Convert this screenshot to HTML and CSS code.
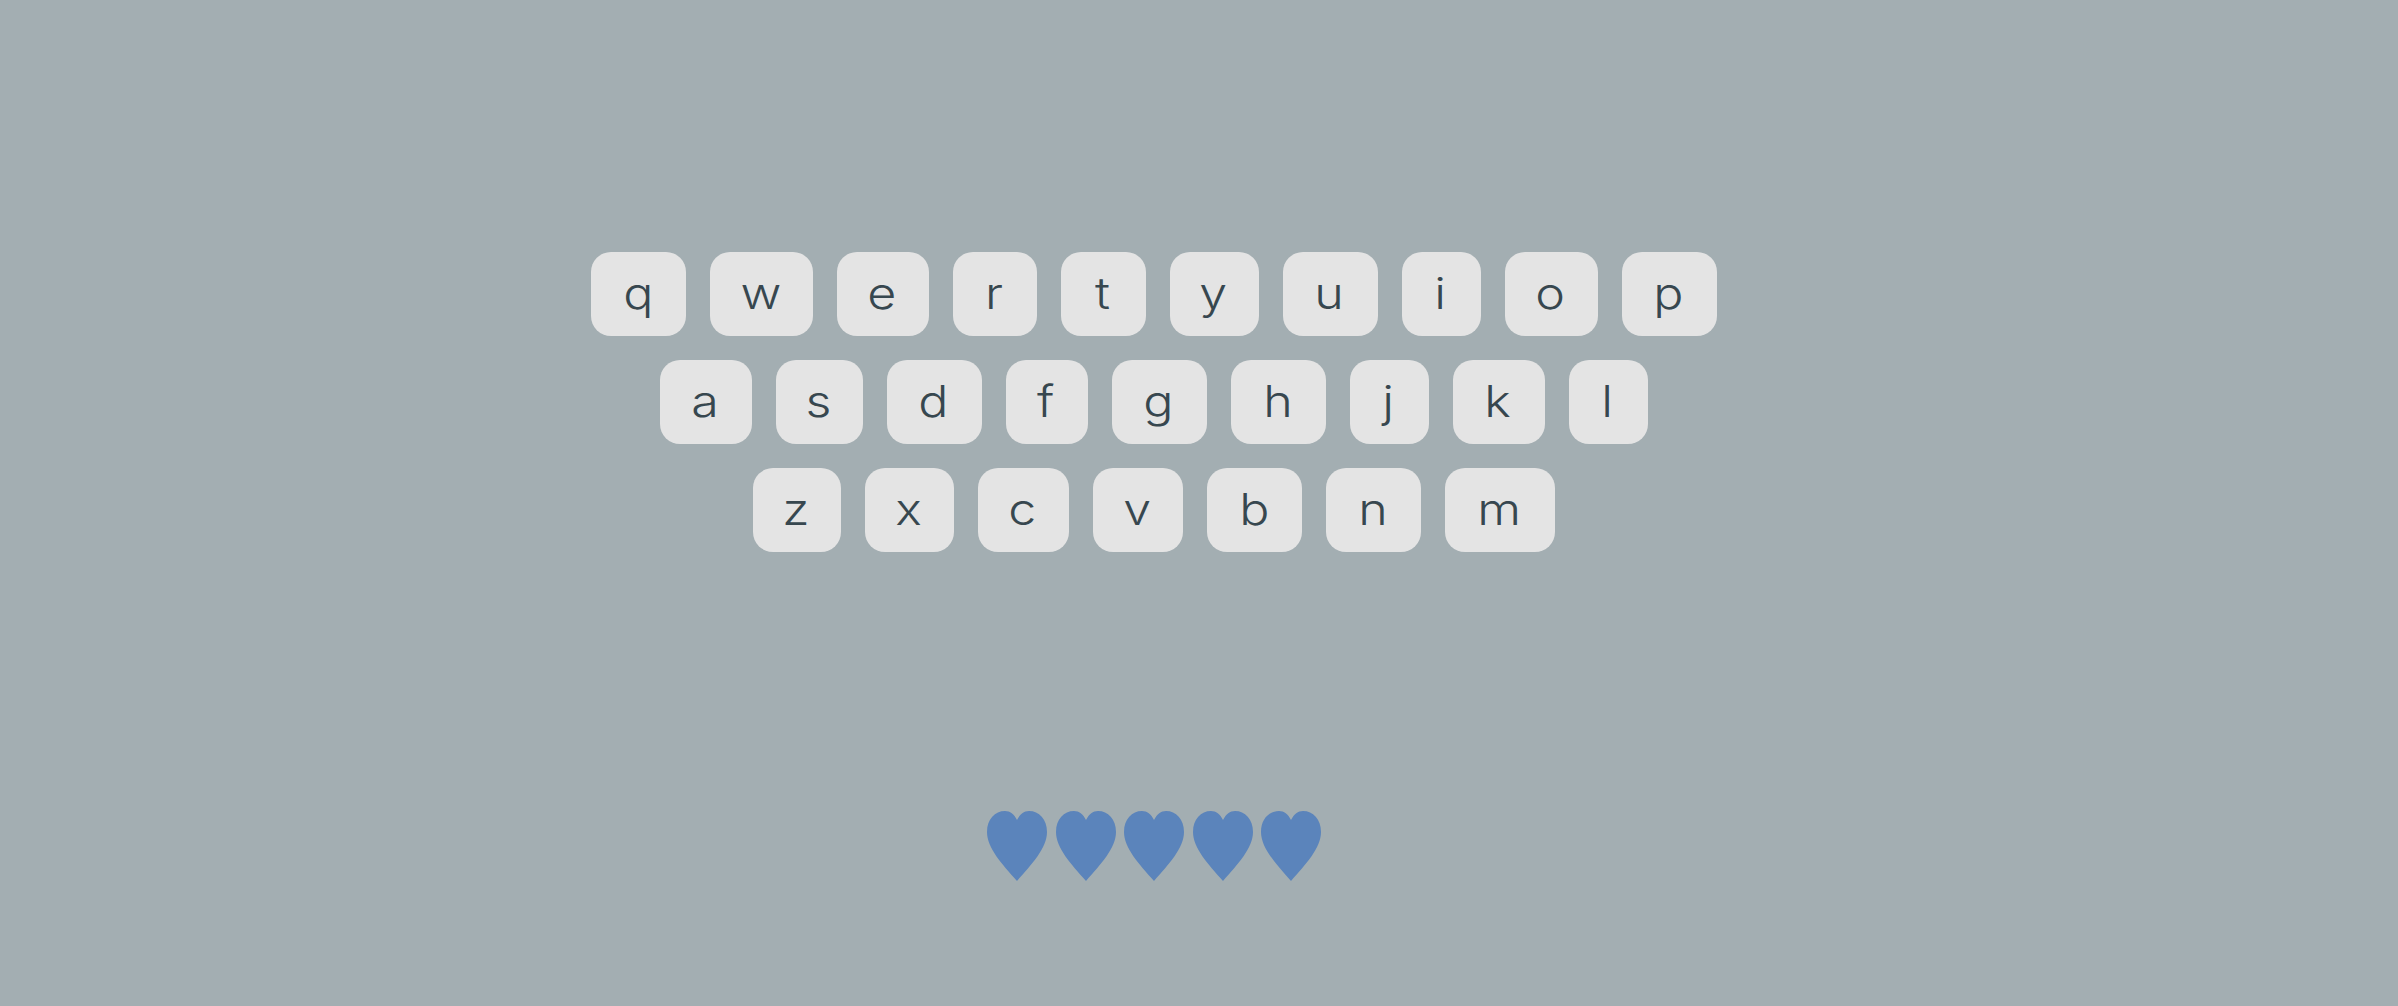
FILE: index.html
```html
<!DOCTYPE html>
<html lang="en">
<head>
<meta charset="utf-8">
<title>Keyboard</title>
<link rel="stylesheet" href="styles.css">
</head>
<body>
<main class="game">
  <section class="keyboard">
    <div class="row">
      <button class="key w95"><span>q</span></button><button class="key w103"><span>w</span></button><button class="key w92"><span>e</span></button><button class="key w84"><span>r</span></button><button class="key w85"><span>t</span></button><button class="key w88"><span>y</span></button><button class="key w95"><span>u</span></button><button class="key w79"><span>i</span></button><button class="key w93"><span>o</span></button><button class="key w95"><span>p</span></button>
    </div>
    <div class="row">
      <button class="key w92"><span>a</span></button><button class="key w87"><span>s</span></button><button class="key w95"><span>d</span></button><button class="key w82"><span>f</span></button><button class="key w95"><span>g</span></button><button class="key w95"><span>h</span></button><button class="key w79"><span>j</span></button><button class="key w92"><span>k</span></button><button class="key w79"><span>l</span></button>
    </div>
    <div class="row">
      <button class="key w88"><span>z</span></button><button class="key w89"><span>x</span></button><button class="key w91"><span>c</span></button><button class="key w90"><span>v</span></button><button class="key w95"><span>b</span></button><button class="key w95"><span>n</span></button><button class="key w110"><span>m</span></button>
    </div>
  </section>
  <section class="lives">
    <svg class="heart" viewBox="0 0 60 70"><path d="M30 70C15 53 0 37 0 21C0 8 8 0 18 0C23 0 27 3 30 9C33 3 37 0 42 0C52 0 60 8 60 21C60 37 45 53 30 70Z"/></svg>
    <svg class="heart" viewBox="0 0 60 70"><path d="M30 70C15 53 0 37 0 21C0 8 8 0 18 0C23 0 27 3 30 9C33 3 37 0 42 0C52 0 60 8 60 21C60 37 45 53 30 70Z"/></svg>
    <svg class="heart" viewBox="0 0 60 70"><path d="M30 70C15 53 0 37 0 21C0 8 8 0 18 0C23 0 27 3 30 9C33 3 37 0 42 0C52 0 60 8 60 21C60 37 45 53 30 70Z"/></svg>
    <svg class="heart" viewBox="0 0 60 70"><path d="M30 70C15 53 0 37 0 21C0 8 8 0 18 0C23 0 27 3 30 9C33 3 37 0 42 0C52 0 60 8 60 21C60 37 45 53 30 70Z"/></svg>
    <svg class="heart" viewBox="0 0 60 70"><path d="M30 70C15 53 0 37 0 21C0 8 8 0 18 0C23 0 27 3 30 9C33 3 37 0 42 0C52 0 60 8 60 21C60 37 45 53 30 70Z"/></svg>
  </section>
</main>
</body>
</html>
```
FILE: styles.css
```css
html, body {
  margin: 0;
  height: 100%;
  background: #a3aeb2;
}
.game {
  box-sizing: border-box;
  height: 100vh;
  padding: 252px 90px 0 0;
  display: flex;
  flex-direction: column;
  align-items: center;
  overflow: hidden;
}
.keyboard {
  display: flex;
  flex-direction: column;
  gap: 24px;
}
.row {
  display: flex;
  justify-content: center;
  gap: 24px;
}
.key {
  height: 84px;
  padding: 0 2px 3px 0;
  border: 0;
  border-radius: 20px;
  background: #e4e4e4;
  color: #37474f;
  font-family: "Inter", "Liberation Sans", sans-serif;
  font-size: 44px;
  font-weight: 300;
  line-height: 1;
}
.key span {
  display: inline-block;
  transform: scaleX(1.14);
}
.w79 { width: 79px; }
.w82 { width: 82px; }
.w84 { width: 84px; }
.w85 { width: 85px; }
.w87 { width: 87px; }
.w88 { width: 88.5px; }
.w89 { width: 89px; }
.w90 { width: 90px; }
.w91 { width: 91px; }
.w92 { width: 92px; }
.w93 { width: 93px; }
.w95 { width: 95px; }
.w103 { width: 103px; }
.w110 { width: 110px; }
.lives {
  display: flex;
  gap: 8.5px;
  margin-top: 259px;
}
.heart {
  display: block;
  width: 60px;
  height: 70px;
  fill: #5b84bb;
}
```
